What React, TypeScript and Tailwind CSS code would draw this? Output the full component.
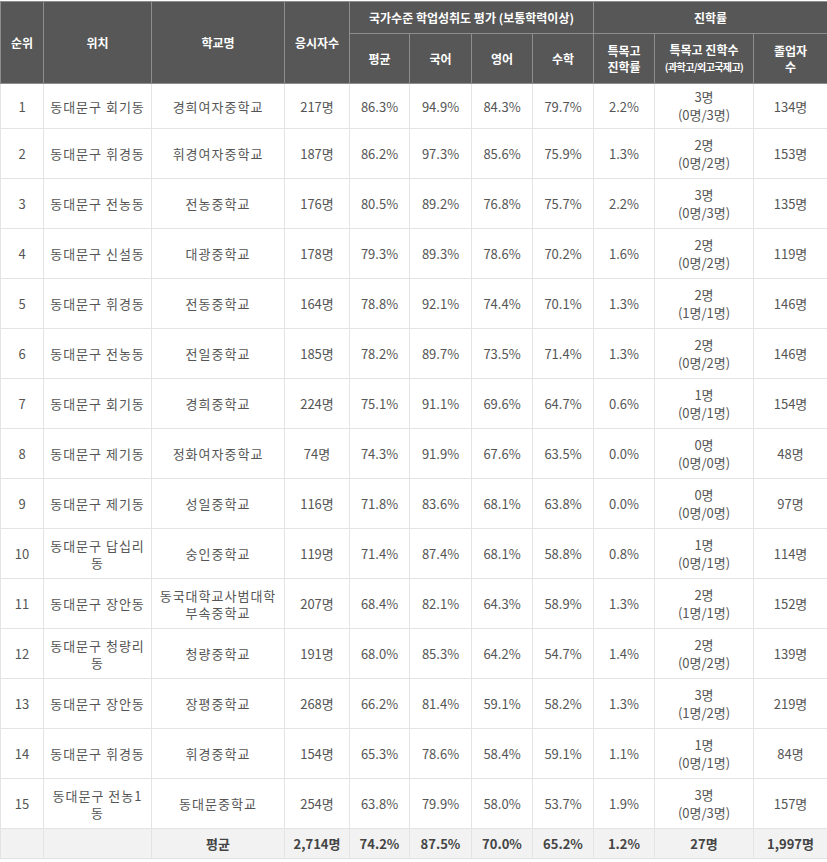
import React from 'react';

type Row = {
  rank: number;
  location: string;
  school: string;
  takers: string;
  avg: string;
  kor: string;
  eng: string;
  math: string;
  rate: string;
  count: string;
  split: string;
  grads: string;
};

const ROWS: Row[] = [
  { rank: 1, location: '동대문구 회기동', school: '경희여자중학교', takers: '217명', avg: '86.3%', kor: '94.9%', eng: '84.3%', math: '79.7%', rate: '2.2%', count: '3명', split: '(0명/3명)', grads: '134명' },
  { rank: 2, location: '동대문구 휘경동', school: '휘경여자중학교', takers: '187명', avg: '86.2%', kor: '97.3%', eng: '85.6%', math: '75.9%', rate: '1.3%', count: '2명', split: '(0명/2명)', grads: '153명' },
  { rank: 3, location: '동대문구 전농동', school: '전농중학교', takers: '176명', avg: '80.5%', kor: '89.2%', eng: '76.8%', math: '75.7%', rate: '2.2%', count: '3명', split: '(0명/3명)', grads: '135명' },
  { rank: 4, location: '동대문구 신설동', school: '대광중학교', takers: '178명', avg: '79.3%', kor: '89.3%', eng: '78.6%', math: '70.2%', rate: '1.6%', count: '2명', split: '(0명/2명)', grads: '119명' },
  { rank: 5, location: '동대문구 휘경동', school: '전동중학교', takers: '164명', avg: '78.8%', kor: '92.1%', eng: '74.4%', math: '70.1%', rate: '1.3%', count: '2명', split: '(1명/1명)', grads: '146명' },
  { rank: 6, location: '동대문구 전농동', school: '전일중학교', takers: '185명', avg: '78.2%', kor: '89.7%', eng: '73.5%', math: '71.4%', rate: '1.3%', count: '2명', split: '(0명/2명)', grads: '146명' },
  { rank: 7, location: '동대문구 회기동', school: '경희중학교', takers: '224명', avg: '75.1%', kor: '91.1%', eng: '69.6%', math: '64.7%', rate: '0.6%', count: '1명', split: '(0명/1명)', grads: '154명' },
  { rank: 8, location: '동대문구 제기동', school: '정화여자중학교', takers: '74명', avg: '74.3%', kor: '91.9%', eng: '67.6%', math: '63.5%', rate: '0.0%', count: '0명', split: '(0명/0명)', grads: '48명' },
  { rank: 9, location: '동대문구 제기동', school: '성일중학교', takers: '116명', avg: '71.8%', kor: '83.6%', eng: '68.1%', math: '63.8%', rate: '0.0%', count: '0명', split: '(0명/0명)', grads: '97명' },
  { rank: 10, location: '동대문구 답십리동', school: '숭인중학교', takers: '119명', avg: '71.4%', kor: '87.4%', eng: '68.1%', math: '58.8%', rate: '0.8%', count: '1명', split: '(0명/1명)', grads: '114명' },
  { rank: 11, location: '동대문구 장안동', school: '동국대학교사범대학부속중학교', takers: '207명', avg: '68.4%', kor: '82.1%', eng: '64.3%', math: '58.9%', rate: '1.3%', count: '2명', split: '(1명/1명)', grads: '152명' },
  { rank: 12, location: '동대문구 청량리동', school: '청량중학교', takers: '191명', avg: '68.0%', kor: '85.3%', eng: '64.2%', math: '54.7%', rate: '1.4%', count: '2명', split: '(0명/2명)', grads: '139명' },
  { rank: 13, location: '동대문구 장안동', school: '장평중학교', takers: '268명', avg: '66.2%', kor: '81.4%', eng: '59.1%', math: '58.2%', rate: '1.3%', count: '3명', split: '(1명/2명)', grads: '219명' },
  { rank: 14, location: '동대문구 휘경동', school: '휘경중학교', takers: '154명', avg: '65.3%', kor: '78.6%', eng: '58.4%', math: '59.1%', rate: '1.1%', count: '1명', split: '(0명/1명)', grads: '84명' },
  { rank: 15, location: '동대문구 전농1동', school: '동대문중학교', takers: '254명', avg: '63.8%', kor: '79.9%', eng: '58.0%', math: '53.7%', rate: '1.9%', count: '3명', split: '(0명/3명)', grads: '157명' },
];

const COLS = [43, 108, 133, 65, 60, 62, 61, 61, 61, 99, 74];

const th = 'border border-[#8e8e8e] bg-[#575757] text-white font-bold text-[12px] leading-[16px] px-[4px] text-center align-middle';
const td = 'border border-[#e4e4e4] px-[5px] text-center align-middle';

const App: React.FC = () => {
  return (
    <div className="w-[827px] bg-white pt-px" style={{ fontFamily: '"Noto Sans CJK KR", "Noto Sans", sans-serif' }}>
      <table className="w-[827px] table-fixed border-collapse text-[13px] leading-[17px] text-[#555]">
        <colgroup>
          {COLS.map((w, i) => (
            <col key={i} style={{ width: w }} />
          ))}
        </colgroup>
        <thead>
          <tr className="h-[32px]">
            <th rowSpan={2} className={th}>순위</th>
            <th rowSpan={2} className={th}>위치</th>
            <th rowSpan={2} className={th}>학교명</th>
            <th rowSpan={2} className={th}>응시자수</th>
            <th colSpan={4} className={th}>국가수준 학업성취도 평가 (보통학력이상)</th>
            <th colSpan={3} className={th}>진학률</th>
          </tr>
          <tr className="h-[50px]">
            <th className={th}>평균</th>
            <th className={th}>국어</th>
            <th className={th}>영어</th>
            <th className={th}>수학</th>
            <th className={th}>특목고<br />진학률</th>
            <th className={th}>
              특목고 진학수
              <br />
              <span className="text-[10px] leading-[16px] tracking-[-0.6px]">(과학고/외고국제고)</span>
            </th>
            <th className={th}>졸업자<br />수</th>
          </tr>
        </thead>
        <tbody>
          {ROWS.map((r, i) => (
            <tr key={r.rank} className={i === 0 ? 'h-[45px]' : 'h-[50px]'}>
              <td className={td}>{r.rank}</td>
              <td className={`${td} tracking-[1px]`}>{r.location}</td>
              <td className={`${td} tracking-[1px]`}>{r.school}</td>
              <td className={td}>{r.takers}</td>
              <td className={td}>{r.avg}</td>
              <td className={td}>{r.kor}</td>
              <td className={td}>{r.eng}</td>
              <td className={td}>{r.math}</td>
              <td className={td}>{r.rate}</td>
              <td className={`${td} leading-[18px]`}>
                {r.count}
                <br />
                {r.split}
              </td>
              <td className={td}>{r.grads}</td>
            </tr>
          ))}
          <tr className="h-[30px] bg-[#f2f2f2] font-bold text-[#444]">
            <td className={td}></td>
            <td className={td}></td>
            <td className={td}>평균</td>
            <td className={td}>2,714명</td>
            <td className={td}>74.2%</td>
            <td className={td}>87.5%</td>
            <td className={td}>70.0%</td>
            <td className={td}>65.2%</td>
            <td className={td}>1.2%</td>
            <td className={td}>27명</td>
            <td className={td}>1,997명</td>
          </tr>
        </tbody>
      </table>
    </div>
  );
};

export default App;
